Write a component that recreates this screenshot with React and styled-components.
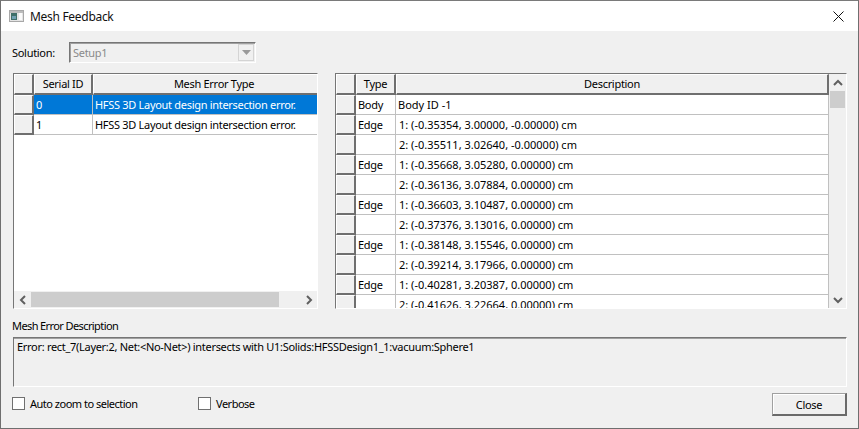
import { createGlobalStyle, styled } from "styled-components";

const GlobalStyle = createGlobalStyle`
  html, body {
    margin: 0;
    padding: 0;
    background: #f0f0f0;
  }
  * {
    box-sizing: border-box;
  }
`;

const Window = styled.div`
  width: 859px;
  height: 429px;
  display: flex;
  flex-direction: column;
  background: #f0f0f0;
  border: 1px solid #6f6f6f;
  border-top-color: #7a7a7a;
  font-family: "Noto Sans", "Open Sans", sans-serif;
  font-size: 11px;
  letter-spacing: -0.3px;
  color: #000;
  overflow: hidden;
`;

const TitleBar = styled.div`
  height: 30px;
  flex: none;
  display: flex;
  align-items: center;
  background: #fff;
  padding: 0 14px 0 8px;
  font-size: 12px;
  color: #111;
`;

const TitleText = styled.span`
  margin-left: 6px;
  flex: 1;
`;

const Body = styled.div`
  flex: 1;
  display: flex;
  flex-direction: column;
  padding: 11px 11px 0 12px;
`;

const SolutionRow = styled.div`
  height: 21px;
  display: flex;
  align-items: center;
`;

const SolutionLabel = styled.span`
  width: 56px;
  margin-left: -1px;
  margin-right: 1px;
`;

const ComboBox = styled.div`
  width: 187px;
  height: 21px;
  display: flex;
  align-items: center;
  justify-content: space-between;
  padding: 0 1px 0 3px;
  border: 1px solid;
  border-color: #767676 #fff #fff #767676;
  box-shadow: inset 1px 1px 0 #a0a0a0;
  color: #8a8a8a;
`;

const ComboArrow = styled.div`
  width: 16px;
  height: 17px;
  display: flex;
  align-items: center;
  justify-content: center;
  background: #f0f0f0;
  border: 1px solid #d4d4d4;
`;

const GridRow = styled.div`
  display: flex;
  justify-content: space-between;
  margin-top: 10px;
`;

const Grid = styled.div`
  width: ${(p) => p.$width}px;
  height: 236px;
  display: flex;
  flex-direction: column;
  background: #fff;
  border: 1px solid;
  border-color: #767676 #fff #fff #767676;
  overflow: hidden;
`;

const GridMain = styled.div`
  flex: 1;
  min-height: 0;
  display: flex;
`;

const GridTable = styled.div`
  flex: 1;
  min-width: 0;
  overflow: hidden;
`;

const Row = styled.div`
  display: flex;
  height: 20px;
  flex: none;
`;

const HeaderRow = styled(Row)`
  height: 21px;
`;

const HeaderCell = styled.div`
  width: ${(p) => p.$width}px;
  flex: none;
  display: flex;
  align-items: center;
  justify-content: center;
  padding-bottom: 1px;
  background: #f0f0f0;
  border-top: 1px solid #fff;
  border-left: 1px solid #fff;
  border-right: 2px solid #6f6f6f;
  border-bottom: 2px solid #6f6f6f;
`;

const RowHandle = styled(HeaderCell)`
  height: 20px;
`;

const Cell = styled.div`
  width: ${(p) => p.$width}px;
  flex: none;
  display: flex;
  align-items: center;
  padding-left: ${(p) => p.$indent || 2}px;
  padding-bottom: 1px;
  white-space: nowrap;
  overflow: hidden;
  letter-spacing: ${(p) => (p.$numeric ? "0" : "inherit")};
  background: ${(p) => (p.$selected ? "#0078d7" : "#fff")};
  color: ${(p) => (p.$selected ? "#fff" : "#000")};
  border-right: 1px solid #c0c0c0;
  border-bottom: 1px solid #c0c0c0;
`;

const VScroll = styled.div`
  width: 17px;
  flex: none;
  display: flex;
  flex-direction: column;
  align-items: stretch;
  background: #f0f0f0;
`;

const ScrollButton = styled.div`
  flex: none;
  width: 17px;
  height: 17px;
  display: flex;
  align-items: center;
  justify-content: center;
`;

const VThumb = styled.div`
  height: 17px;
  margin: 0 1px;
  background: #cdcdcd;
`;

const VSpacer = styled.div`
  flex: 1;
`;

const HScroll = styled.div`
  height: 17px;
  flex: none;
  display: flex;
  background: #f0f0f0;
`;

const HThumb = styled.div`
  width: 248px;
  height: 15px;
  margin-top: 1px;
  background: #cdcdcd;
`;

const DescriptionLabel = styled.div`
  margin: 9px 0 0 -1px;
  height: 16px;
  line-height: 16px;
  letter-spacing: -0.6px;
`;

const DescriptionBox = styled.div`
  margin-top: 3px;
  height: 50px;
  padding: 1px 3px;
  border: 1px solid;
  border-color: #767676 #fff #fff #767676;
  box-shadow: inset 0 1px 0 #a0a0a0;
`;

const Footer = styled.div`
  display: flex;
  align-items: center;
  margin: 6px 0 0 -1px;
`;

const CheckLabel = styled.label`
  width: ${(p) => p.$width}px;
  display: flex;
  align-items: center;
  gap: 5px;
  margin-bottom: 2px;
  letter-spacing: -0.5px;
`;

const CheckBox = styled.span`
  width: 13px;
  height: 13px;
  flex: none;
  background: #fff;
  border: 1px solid #707070;
`;

const CloseButton = styled.button`
  margin-left: auto;
  width: 75px;
  height: 23px;
  background: #f0f0f0;
  font: inherit;
  letter-spacing: inherit;
  color: #000;
  padding: 0;
  border-style: solid;
  border-width: 1px 2px 2px 1px;
  border-color: #a0a0a0 #6a6a6a #6a6a6a #a0a0a0;
  box-shadow: inset 1px 1px 0 #fff;
`;

const Chevron = ({ dir }) => {
  const points = {
    up: "1,6 5,2 9,6",
    down: "1,2 5,6 9,2",
    left: "6,1 2,5 6,9",
    right: "2,1 6,5 2,9",
  }[dir];
  const size = dir === "up" || dir === "down" ? [10, 8] : [8, 10];
  return (
    <svg width={size[0]} height={size[1]} viewBox={`0 0 ${size[0]} ${size[1]}`}>
      <polyline points={points} fill="none" stroke="#606060" strokeWidth="2" />
    </svg>
  );
};

const AppIcon = () => (
  <svg width="15" height="12" viewBox="0 0 15 12">
    <rect x="0.5" y="0.5" width="14" height="11" fill="#e4e4e4" stroke="#a8a8a8" />
    <rect x="1" y="1" width="13" height="2" fill="#bcbcbc" />
    <rect x="2" y="3" width="6" height="7" fill="#3f6f68" />
    <rect x="3" y="6" width="4" height="3" fill="#6f9fb0" />
    <rect x="10" y="3" width="3" height="7" fill="#fafafa" />
  </svg>
);

const CloseIcon = () => (
  <svg width="11" height="11" viewBox="0 0 11 11">
    <path d="M0.5 0.5 L10.5 10.5 M10.5 0.5 L0.5 10.5" stroke="#111" strokeWidth="1" />
  </svg>
);

const errorRows = [
  { id: "0", type: "HFSS 3D Layout design intersection error.", selected: true },
  { id: "1", type: "HFSS 3D Layout design intersection error." },
];

const detailRows = [
  ["Body", "Body ID -1"],
  ["Edge", "1: (-0.35354, 3.00000, -0.00000) cm"],
  ["", "2: (-0.35511, 3.02640, -0.00000) cm"],
  ["Edge", "1: (-0.35668, 3.05280, 0.00000) cm"],
  ["", "2: (-0.36136, 3.07884, 0.00000) cm"],
  ["Edge", "1: (-0.36603, 3.10487, 0.00000) cm"],
  ["", "2: (-0.37376, 3.13016, 0.00000) cm"],
  ["Edge", "1: (-0.38148, 3.15546, 0.00000) cm"],
  ["", "2: (-0.39214, 3.17966, 0.00000) cm"],
  ["Edge", "1: (-0.40281, 3.20387, 0.00000) cm"],
  ["", "2: (-0.41626, 3.22664, 0.00000) cm"],
];

export default function App() {
  return (
    <>
      <GlobalStyle />
      <Window>
        <TitleBar>
          <AppIcon />
          <TitleText>Mesh Feedback</TitleText>
          <CloseIcon />
        </TitleBar>
        <Body>
          <SolutionRow>
            <SolutionLabel>Solution:</SolutionLabel>
            <ComboBox>
              Setup1
              <ComboArrow>
                <svg width="9" height="5" viewBox="0 0 9 5">
                  <path d="M0 0 H9 L4.5 5 Z" fill="#9a9a9a" />
                </svg>
              </ComboArrow>
            </ComboBox>
          </SolutionRow>

          <GridRow>
            <Grid $width={305}>
              <GridMain>
                <GridTable>
                  <HeaderRow>
                    <HeaderCell $width={20} />
                    <HeaderCell $width={59}>Serial ID</HeaderCell>
                    <HeaderCell $width={243}>Mesh Error Type</HeaderCell>
                  </HeaderRow>
                  {errorRows.map((row) => (
                    <Row key={row.id}>
                      <RowHandle $width={20} />
                      <Cell $width={59} $selected={row.selected}>{row.id}</Cell>
                      <Cell $width={243} $selected={row.selected}>{row.type}</Cell>
                    </Row>
                  ))}
                </GridTable>
              </GridMain>
              <HScroll>
                <ScrollButton><Chevron dir="left" /></ScrollButton>
                <HThumb />
                <VSpacer />
                <ScrollButton><Chevron dir="right" /></ScrollButton>
              </HScroll>
            </Grid>

            <Grid $width={512}>
              <GridMain>
                <GridTable>
                  <HeaderRow>
                    <HeaderCell $width={20} />
                    <HeaderCell $width={40}>Type</HeaderCell>
                    <HeaderCell $width={433}>Description</HeaderCell>
                  </HeaderRow>
                  {detailRows.map((row) => (
                    <Row key={row[1]}>
                      <RowHandle $width={20} />
                      <Cell $width={40}>{row[0]}</Cell>
                      <Cell $width={433} $numeric $indent={row[0] === "Body" ? 2 : 3}>{row[1]}</Cell>
                    </Row>
                  ))}
                </GridTable>
                <VScroll>
                  <ScrollButton><Chevron dir="up" /></ScrollButton>
                  <VThumb />
                  <VSpacer />
                  <ScrollButton><Chevron dir="down" /></ScrollButton>
                </VScroll>
              </GridMain>
            </Grid>
          </GridRow>

          <DescriptionLabel>Mesh Error Description</DescriptionLabel>
          <DescriptionBox>
            {"Error: rect_7(Layer:2, Net:<No-Net>) intersects with U1:Solids:HFSSDesign1_1:vacuum:Sphere1"}
          </DescriptionBox>

          <Footer>
            <CheckLabel $width={186}>
              <CheckBox />
              Auto zoom to selection
            </CheckLabel>
            <CheckLabel $width={100}>
              <CheckBox />
              Verbose
            </CheckLabel>
            <CloseButton>Close</CloseButton>
          </Footer>
        </Body>
      </Window>
    </>
  );
}
